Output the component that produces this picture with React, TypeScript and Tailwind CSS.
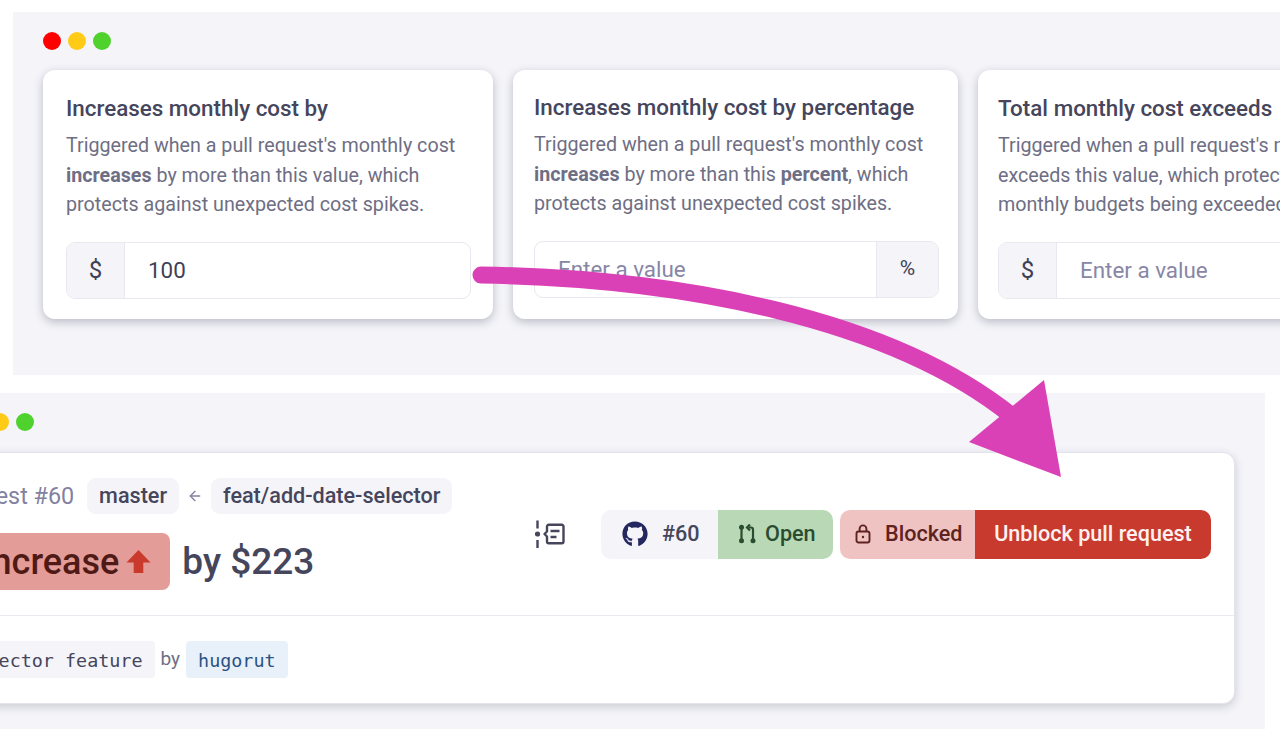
import React from 'react';
import { FaGithub } from 'react-icons/fa';
import { ArrowLeft } from 'lucide-react';

const Dots = () => (
  <div className="flex gap-[7px]">
    <span className="w-[18px] h-[18px] rounded-full bg-[#ff0000]" />
    <span className="w-[18px] h-[18px] rounded-full bg-[#ffcb17]" />
    <span className="w-[18px] h-[18px] rounded-full bg-[#50d22e]" />
  </div>
);

const Addon = ({ children, side }: { children: React.ReactNode; side: 'left' | 'right' }) => (
  <div
    className={`shrink-0 flex items-center justify-center bg-[#f4f4f9] text-[#3f3f56] ${
      side === 'left' ? 'w-[58px] border-r border-[#e8e8f0] text-[24px]' : 'w-[62px] border-l border-[#e8e8f0] text-[21px]'
    }`}
  >
    {children}
  </div>
);

const Card = ({
  title,
  className,
  children,
  input,
}: {
  title: string;
  className: string;
  children: React.ReactNode;
  input: React.ReactNode;
}) => (
  <div className={`${className} shrink-0 h-[249px] bg-white rounded-[12px] shadow-[0_3px_10px_rgba(40,40,70,0.28)]`}>
    <h3 className="text-[22.4px] leading-[28px] font-medium text-[#45455c] whitespace-nowrap">{title}</h3>
    <p className="mt-[9px] text-[19.7px] leading-[29.5px] text-[#6e6e84] whitespace-nowrap">{children}</p>
    <div className="mt-[22px] h-[57px] flex rounded-[9px] border border-[#e8e8f0] overflow-hidden">{input}</div>
  </div>
);

const LockIcon = () => (
  <svg width="16" height="20" viewBox="0 0 16 20" fill="none" stroke="#5e2320" strokeWidth="1.9">
    <rect x="1.5" y="7.5" width="13" height="11" rx="2" />
    <path d="M4.6 7.5V4.8a3.4 3.4 0 0 1 6.8 0v2.7" />
    <circle cx="8" cy="13" r="1.2" fill="#5e2320" stroke="none" />
  </svg>
);

const PrIcon = () => (
  <svg width="18" height="20" viewBox="0 0 18 20" fill="none" stroke="#2a4c30" strokeWidth="2.2">
    <path d="M3.5 3v14" />
    <circle cx="3.5" cy="3.2" r="2.5" fill="#2a4c30" stroke="none" />
    <circle cx="3.5" cy="16.8" r="2.5" fill="#2a4c30" stroke="none" />
    <path d="M10.5 3.5H13a2 2 0 0 1 2 2V16" />
    <path d="M12 0.5L9 3.5l3 3" />
    <circle cx="15" cy="16.8" r="2.5" fill="#2a4c30" stroke="none" />
  </svg>
);

const TimelineIcon = () => (
  <svg width="30" height="30" viewBox="0 0 30 30" fill="none" stroke="#45455c" strokeWidth="2.4">
    <path d="M2.5 1.5v8M2.5 21v8" />
    <circle cx="2.5" cy="15" r="2.6" fill="#45455c" stroke="none" />
    <path d="M9.5 15l2.5-2.5V7.5A1.7 1.7 0 0 1 13.7 5.800h13.1a1.7 1.7 0 0 1 1.7 1.7v15a1.7 1.7 0 0 1-1.7 1.7H13.700A1.700 1.700 0 0 1 12 22.500v-5z" strokeLinejoin="round" />
    <path d="M15.500 12h9M15.500 18h6" />
  </svg>
);

const App = () => {
  return (
    <div className="relative w-[1280px] h-[750px] overflow-hidden bg-white font-['Roboto',sans-serif]">
      <div className="pt-[12px] pl-[13px]">
        <div className="h-[363px] bg-[#f4f4f9] pt-[20px] pl-[30px] overflow-hidden">
          <Dots />
          <div className="mt-[20px] flex gap-[20px]">
            <Card
              title="Increases monthly cost by"
              className="w-[450px] pl-[23px] pr-[22px] pt-[24px]"
              input={
                <>
                  <Addon side="left">$</Addon>
                  <div className="flex-1 flex items-center pl-[23px] pt-[2px] text-[22.4px] text-[#3f3f56]">100</div>
                </>
              }
            >
              Triggered when a pull request's monthly cost
              <br />
              <b className="font-bold">increases</b> by more than this value, which
              <br />
              protects against unexpected cost spikes.
            </Card>
            <Card
              title="Increases monthly cost by percentage"
              className="w-[445px] pl-[21px] pr-[19px] pt-[23px]"
              input={
                <>
                  <div className="flex-1 flex items-center pl-[23px] pt-[2px] text-[22.4px] text-[#8886a6]">Enter a value</div>
                  <Addon side="right">%</Addon>
                </>
              }
            >
              Triggered when a pull request's monthly cost
              <br />
              <b className="font-bold">increases</b> by more than this <b className="font-bold">percent</b>, which
              <br />
              protects against unexpected cost spikes.
            </Card>
            <Card
              title="Total monthly cost exceeds"
              className="w-[445px] pl-[20px] pr-[20px] pt-[24px]"
              input={
                <>
                  <Addon side="left">$</Addon>
                  <div className="flex-1 flex items-center pl-[23px] pt-[2px] text-[22.4px] text-[#8886a6]">Enter a value</div>
                </>
              }
            >
              Triggered when a pull request's monthly cost
              <br />
              exceeds this value, which protects against
              <br />
              monthly budgets being exceeded.
            </Card>
          </div>
        </div>
      </div>

      <div className="mt-[18px] -ml-[150px] w-[1415px] h-[336px] bg-[#f4f4f9] pt-[20px] px-[30px]">
        <div className="pl-[86px]">
          <Dots />
        </div>
        <div className="mt-[21px] h-[252px] bg-white rounded-[12px] border border-[#e4e4ec] shadow-[0_3px_10px_rgba(40,40,70,0.2)]">
          <div className="h-[163px] border-b border-[#e9e9ef] pl-[24px] pr-[23px] flex items-center justify-between">
            <div>
              <div className="flex items-center">
                <span className="text-[23.3px] text-[#8281a0]">Pull request #60</span>
                <span className="ml-[13px] h-[36px] px-[12px] flex items-center rounded-[9px] bg-[#f4f4f9] text-[21.6px] font-medium text-[#45455c]">master</span>
                <ArrowLeft className="mx-[8px] w-[16px] h-[16px] text-[#8281a0]" />
                <span className="h-[36px] px-[12px] flex items-center rounded-[9px] bg-[#f4f4f9] text-[21.6px] font-medium text-[#45455c]">feat/add-date-selector</span>
              </div>
              <div className="mt-[19px] -ml-[18px] flex items-center">
                <span className="h-[57px] pl-[12px] pr-[19px] flex items-center gap-[7px] rounded-[8px] bg-[#e49c98] text-[36px] font-medium text-[#4f1a16]">
                  Cost increase
                  <svg width="25" height="25" viewBox="0 0 26 26" fill="#c9392c">
                    <path d="M13 1L25.5 14H18v11H8V14H0.5z" />
                  </svg>
                </span>
                <span className="ml-[12px] text-[37px] font-medium text-[#45455c]">by $223</span>
              </div>
            </div>
            <div className="flex items-center">
              <TimelineIcon />
              <div className="ml-[36px] flex h-[49px] text-[21.6px] font-medium">
                <div className="w-[117px] flex items-center pl-[21px] gap-[14px] rounded-l-[10px] bg-[#f4f4f9] text-[#45455c]">
                  <FaGithub className="w-[26px] h-[26px] text-[#24285f]" />
                  #60
                </div>
                <div className="w-[115px] flex items-center pl-[20px] gap-[9px] rounded-r-[10px] bg-[#b9d9b6] text-[#2a4c30]">
                  <PrIcon />
                  Open
                </div>
                <div className="ml-[7px] w-[135px] flex items-center pl-[15px] gap-[14px] rounded-l-[10px] bg-[#eec3c2] text-[#5e2320]">
                  <LockIcon />
                  Blocked
                </div>
                <div className="w-[236px] flex items-center justify-center rounded-r-[10px] bg-[#c93a2e] text-[#fdf1f0]">Unblock pull request</div>
              </div>
            </div>
          </div>
          <div className="h-[88px] pl-[17px] pb-[2px] flex items-center font-['DejaVu_Sans_Mono',monospace] text-[18.4px]">
            <span className="h-[37px] px-[12px] pt-[3px] flex items-center rounded-[4px] bg-[#f4f4f9] text-[#45455c] whitespace-pre">date selector feature</span>
            <span className="mx-[6px] font-['Roboto',sans-serif] text-[19px] text-[#6e6e84]">by</span>
            <span className="h-[37px] px-[12px] pt-[3px] flex items-center rounded-[4px] bg-[#e8f1f9] font-medium text-[#2c5282]">hugorut</span>
          </div>
        </div>
      </div>

      {/* pink annotation arrow across both panels */}
      <svg className="absolute inset-0 pointer-events-none" width="1280" height="750" viewBox="0 0 1280 750" fill="none">
        <path d="M481 275C680 278 890 318 1012 416" stroke="#db41b6" strokeWidth="17" strokeLinecap="round" />
        <polygon points="1044,380 1061,477 969,442" fill="#db41b6" />
      </svg>
    </div>
  );
};

export default App;
